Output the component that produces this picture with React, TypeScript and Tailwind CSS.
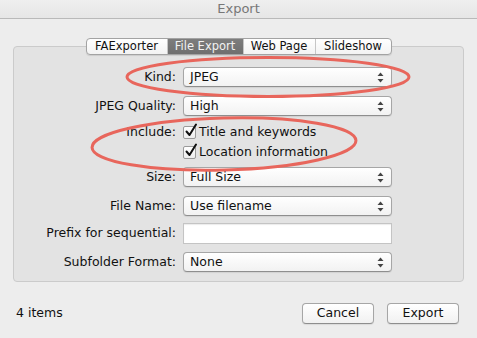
import React from "react";

const font = { fontFamily: '"DejaVu Sans", "Liberation Sans", sans-serif' };

function Arrows() {
  return (
    <svg width="7" height="11" viewBox="0 0 7 11" className="absolute right-[7px] top-[4px]">
      <path d="M3.5 0.5 L6.5 4 L0.5 4 Z" fill="#444" />
      <path d="M3.5 10.5 L6.5 7 L0.5 7 Z" fill="#444" />
    </svg>
  );
}

function Select({ value }: { value: string }) {
  return (
    <div className="relative flex h-[20px] w-[209px] items-center rounded-[4px] border border-[#a6a6a6] border-b-[#8e8e8e] bg-gradient-to-b from-white to-[#f2f2f2] pl-[6px] text-[12.5px] text-[#111] shadow-[0_1px_1px_rgba(0,0,0,0.08)]">
      {value}
      <Arrows />
    </div>
  );
}

function Check({ label }: { label: string }) {
  return (
    <div className="flex h-[20px] items-center gap-[3px] text-[12.5px] text-[#111]">
      <div className="relative h-[13px] w-[13px] rounded-[2px] border border-[#9a9a9a] bg-gradient-to-b from-white to-[#ededed]">
        <svg width="14" height="15" viewBox="0 0 14 15" className="absolute left-[0px] top-[-4px]">
          <path d="M2.5 8.5 L5.5 12 L12 1.5" fill="none" stroke="#111" strokeWidth="2" strokeLinecap="round" strokeLinejoin="round" />
        </svg>
      </div>
      {label}
    </div>
  );
}

function Row({ label, children, className = "" }: { label: string; children: React.ReactNode; className?: string }) {
  return (
    <div className={"flex items-center " + className}>
      <div className="w-[163px] pr-[1px] text-right text-[12.5px] text-[#111]">{label}</div>
      <div className="ml-[6px]">{children}</div>
    </div>
  );
}

function Tab({ label, active, last }: { label: string; active?: boolean; last?: boolean }) {
  return (
    <div
      className={
        "flex h-full items-center justify-center text-[11.5px] " +
        (active
          ? "bg-gradient-to-b from-[#7d7d7d] to-[#6f6f6f] text-[#f2f2f2]"
          : "text-[#111]") +
        (last ? "" : " border-r border-[#c6c6c6]")
      }
      style={{ width: label === "FAExporter" ? 81 : label === "File Export" ? 76 : label === "Web Page" ? 72 : 75 }}
    >
      {label}
    </div>
  );
}

export default function App() {
  return (
    <div className="relative flex h-[338px] w-[477px] flex-col overflow-hidden bg-[#ededed]" style={font}>
      {/* title bar */}
      <div className="flex h-[19px] items-center justify-center border-b border-[#b9b9b9] bg-gradient-to-b from-[#efefef] to-[#e6e6e6] text-[13px] text-[#777]">
        Export
      </div>

      {/* tabs */}
      <div className="relative z-10 mt-[19px] flex justify-center">
        <div className="flex h-[17px] overflow-hidden rounded-[4px] border border-[#a3a3a3] bg-gradient-to-b from-white to-[#f3f3f3] shadow-[0_1px_1px_rgba(0,0,0,0.1)]">
          <Tab label="FAExporter" />
          <Tab label="File Export" active />
          <Tab label="Web Page" />
          <Tab label="Slideshow" last />
        </div>
      </div>

      {/* panel */}
      <div className="mx-[13px] mt-[-9px] flex h-[236px] flex-col rounded-[4px] border border-[#cbcbcb] bg-[#e3e3e3] pt-[20px]">
        <Row label="Kind:">
          <Select value="JPEG" />
        </Row>
        <Row label="JPEG Quality:" className="mt-[9px]">
          <Select value="High" />
        </Row>
        <div className="mt-[6px] flex">
          <div className="w-[163px] pr-[1px] pt-[2px] text-right text-[12.5px] leading-[16px] text-[#111]">Include:</div>
          <div className="ml-[6px] flex flex-col">
            <Check label="Title and keywords" />
            <Check label="Location information" />
          </div>
        </div>
        <Row label="Size:" className="mt-[5px]">
          <Select value="Full Size" />
        </Row>
        <Row label="File Name:" className="mt-[9px]">
          <Select value="Use filename" />
        </Row>
        <Row label="Prefix for sequential:" className="mt-[7px]">
          <div className="h-[21px] w-[209px] border border-[#c4c4c4] bg-white shadow-[inset_0_1px_1px_rgba(0,0,0,0.08)]" />
        </Row>
        <Row label="Subfolder Format:" className="mt-[8px]">
          <Select value="None" />
        </Row>
      </div>

      {/* footer */}
      <div className="mt-[21px] flex items-center pl-[16px] pr-[18px]">
        <div className="flex-1 text-[12.5px] text-[#111]">4 items</div>
        <button className="flex h-[21px] w-[72px] items-center justify-center rounded-[4px] border border-[#a6a6a6] border-b-[#8e8e8e] bg-gradient-to-b from-white to-[#f1f1f1] text-[12.5px] text-[#111] shadow-[0_1px_1px_rgba(0,0,0,0.08)]">
          Cancel
        </button>
        <button className="ml-[13px] flex h-[21px] w-[72px] items-center justify-center rounded-[4px] border border-[#a6a6a6] border-b-[#8e8e8e] bg-gradient-to-b from-white to-[#f1f1f1] text-[12.5px] text-[#111] shadow-[0_1px_1px_rgba(0,0,0,0.08)]">
          Export
        </button>
      </div>

      {/* red annotation ellipses */}
      <svg className="pointer-events-none absolute left-0 top-0" width="477" height="338">
        <ellipse cx="268" cy="77" rx="141" ry="19.5" fill="none" stroke="#e8665c" strokeWidth="3" />
        <ellipse cx="224" cy="144" rx="132" ry="26" fill="none" stroke="#e8665c" strokeWidth="3" transform="rotate(-1.5 224 144)" />
      </svg>
    </div>
  );
}
